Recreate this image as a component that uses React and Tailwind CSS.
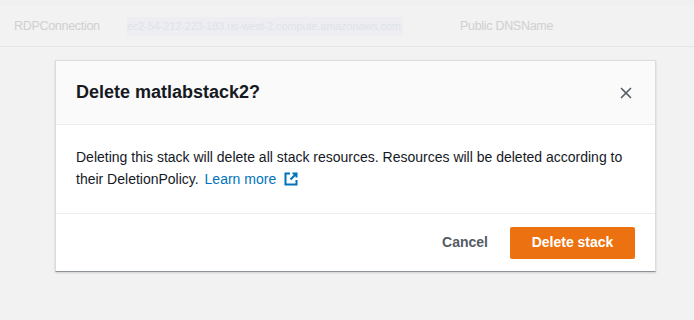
import { X } from 'lucide-react';

function ExternalIcon() {
  return (
    <svg width="14" height="14" viewBox="0 0 14 14" fill="none" className="inline-block ml-[8px] -mt-[2px] align-middle">
      <path d="M6 1.5H1.5v11h11V8" stroke="#0073bb" strokeWidth="2" />
      <path d="M8.5 1.5h4v4M12.5 1.5 6.5 7.5" stroke="#0073bb" strokeWidth="2" />
    </svg>
  );
}

export default function App() {
  return (
    <div className="w-[694px] h-[320px] bg-[#f2f2f2] overflow-hidden font-['Liberation_Sans',sans-serif]">
      <div className="h-[6px] bg-[#f0f0f0]" />
      <div className="h-[41px] flex items-center border-b border-[#e6e6e6] text-[#d0d0d0] whitespace-nowrap">
        <span className="ml-[14px] w-[113px] text-[12.5px] tracking-[-0.3px]">RDPConnection</span>
        <span className="bg-[#eeedf2] text-[#dde3ea] w-[276px] h-[19px] leading-[19px] text-[11px] tracking-[-0.15px] overflow-hidden">ec2-54-212-223-183.us-west-2.compute.amazonaws.com</span>
        <span className="ml-[57px] text-[12.5px] tracking-[-0.3px]">Public DNSName</span>
      </div>
      <div className="ml-[55px] mt-[13px] w-[601px] bg-white border border-[#dcdcdc] border-b-[#8d9399] shadow-[0_1px_2px_rgba(0,0,0,0.15)]">
        <div className="h-[64px] bg-[#fafafa] border-b border-[#eaeded] flex items-center justify-between pl-[20px] pr-[20px]">
          <h2 className="text-[18px] font-bold text-[#16191f]">Delete matlabstack2?</h2>
          <X size={18} strokeWidth={2.2} className="text-[#545b64]" />
        </div>
        <div className="px-[20px] pt-[21px] pb-[23px] border-b border-[#eaeded] text-[14px] leading-[22px] text-[#16191f]">
          Deleting this stack will delete all stack resources. Resources will be deleted according to
          their DeletionPolicy. <span className="text-[#0073bb] ml-[2px]">Learn more</span>
          <ExternalIcon />
        </div>
        <div className="h-[57px] flex items-center justify-end pr-[20px] gap-[22px]">
          <button className="text-[14px] font-bold text-[#545b64]">Cancel</button>
          <button className="h-[32px] w-[125px] rounded-[2px] bg-[#ec7211] text-white text-[14px] font-bold">
            Delete stack
          </button>
        </div>
      </div>
    </div>
  );
}
